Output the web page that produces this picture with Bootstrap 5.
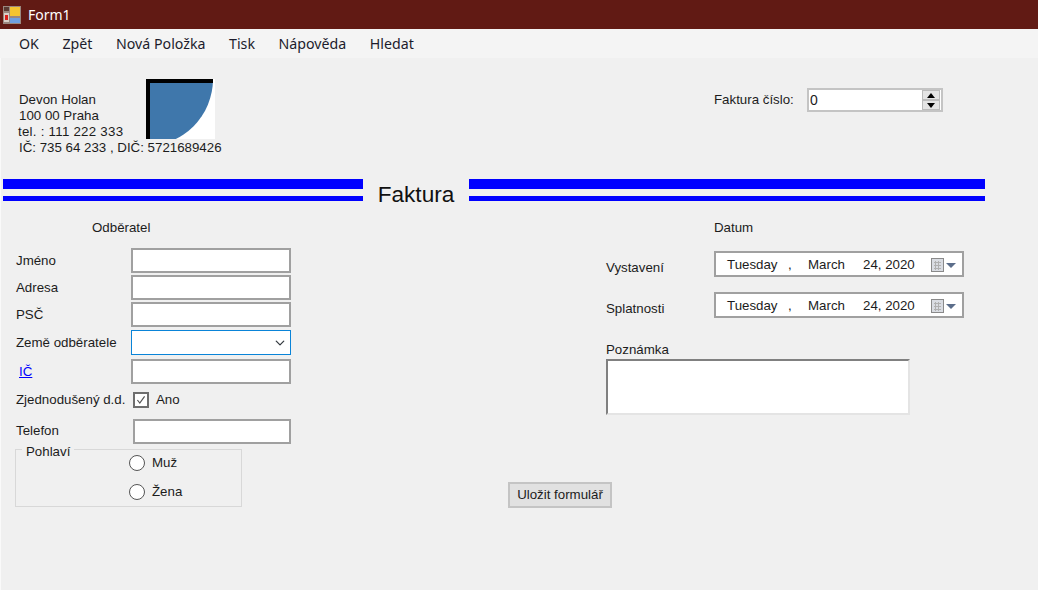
<!DOCTYPE html>
<html lang="cs">
<head>
    <meta charset="UTF-8">
    <meta name="viewport" content="width=device-width, initial-scale=1.0">
    <title>Form1</title>
    <link href="https://cdn.jsdelivr.net/npm/bootstrap@5.3.0/dist/css/bootstrap.min.css" rel="stylesheet">
    <style>
        body { background: #f0f0f0; color: #1c1c1c; font: 13.3px/16px "Liberation Sans", Arial, sans-serif; min-height: 590px; overflow: hidden; box-shadow: inset 1px 0 0 #fafafa; }
        .title-bar { height: 29px; background: #611a14; color: #fff; font: 14px/29px "Noto Sans", sans-serif; padding-left: 3px; gap: 7px; }
        .menu-bar { height: 29px; background: #f4f4f4; padding: 0 0 0 19px; font: 14.2px "Noto Sans", sans-serif; justify-content: flex-start; }
        .menu-bar .navbar-nav { gap: 23.6px; }
        .menu-bar .nav-link { padding: 0; color: #1c1c2c; line-height: 29px; }
        .head-area { height: 121px; padding: 21px 0 0 19px; }
        .seller { width: 127px; padding-top: 13px; white-space: nowrap; }
        .seller div:nth-child(3) { margin-left: -1px; letter-spacing: .25px; }
        .logo-pic { width: 69px; height: 60px; display: block; }
        .number-box { margin-left: 499px; margin-top: 9px; }
        .number-box label { width: 93px; }
        .spin-wrap { width: 136px; height: 24px; border: 2px solid #c4c4c4; background: #fff; }
        .spin-wrap input { width: 112px; border: 0; padding: 0 0 0 1px; outline: 0; font: inherit; font-size: 14px; color: #1c1c1c; }
        .spin-btns { width: 18px; margin: 0 1px 0 auto; }
        .spin-btns span { height: 10px; background: #e4e4e4; border: 1px solid #bbb; font-size: 0; }
        .band { height: 22px; padding-left: 3px; }
        .band-lines { border-top: 10px solid #0000ff; border-bottom: 5px solid #0000ff; height: 22px; }
        .band-title { width: 106px; text-align: center; font-size: 22.6px; line-height: 32px; color: #111; }
        .client-col { width: 300px; padding: 19px 0 0 16px; }
        .col-caption { margin-left: 76px; }
        .client-grid { display: grid; grid-template-columns: 115px 160px; grid-template-rows: 27px 27px 28px 29px 28px 32px 30px; margin-top: 12px; }
        .client-grid label, .client-grid a { line-height: 25px; white-space: nowrap; }
        .client-grid .tel-label { margin-top: -1px; }
        .win-input.form-control, .win-input.form-select { height: 25px; min-height: 0; padding: 0 3px; border: 2px solid #a0a0a0; border-radius: 0; font-size: 13.3px; box-shadow: none; background-color: #fff; }
        .win-input.form-select { border-color: #0a84d8; border-width: 1.5px; background-size: 12px 10px; background-position: right 4px center; }
        .win-input.shifted { margin-left: 2px; width: 158px; }
        .link-ic { color: #0000ff; margin-left: 3px; }
        .check-row { margin-left: 2px; height: 25px; gap: 7px; }
        .win-check.form-check-input { width: 16px; height: 16px; margin: 0; border: 2px solid #6e6e6e; border-radius: 0; background-color: #fff; box-shadow: none; }
        .win-check.form-check-input:checked { background-color: #fff; border-color: #6e6e6e; background-image: url("data:image/svg+xml,%3csvg xmlns='http://www.w3.org/2000/svg' viewBox='0 0 20 20'%3e%3cpath fill='none' stroke='%23555' stroke-width='2' d='M4 10l4 5 8-11'/%3e%3c/svg%3e"); }
        .gender-box { position: relative; width: 227px; height: 58px; margin-left: -1px; border: 1px solid #d8d8d8; padding: 0 0 0 113px; }
        .gender-box .box-title { position: absolute; left: 6px; top: -6px; background: #f0f0f0; padding: 0 4px; }
        .gender-row { height: 29px; gap: 7px; }
        .gender-row:first-of-type { margin-top: -2px; }
        .win-radio.form-check-input { width: 16px; height: 16px; margin: 0; border: 1.5px solid #555; background-color: #fff; box-shadow: none; }
        .save-col { width: 306px; padding: 281px 0 0 208px; }
        .save-btn.btn { width: 104px; height: 26px; padding: 0; background: #e1e1e1; border: 2px solid #c4c4c4; border-radius: 0; font-size: 13.3px; color: #1c1c1c; }
        .date-col { padding-top: 19px; }
        .date-col .col-caption { margin-left: 108px; }
        .date-row { margin-top: 15px; height: 26px; }
        .date-row label { width: 108px; padding-top: 9px; }
        .date-pick { width: 250px; height: 26px; border: 2px solid #a0a0a0; background: #fff; padding: 2px 0 0 11px; }
        .date-pick span { white-space: nowrap; }
        .part-day { width: 61px; }
        .part-comma { width: 20px; }
        .part-month { width: 55px; }
        .part-year { width: 68px; }
        .note-label { margin-top: 24px; }
        .note-area.form-control { width: 304px; height: 56px; margin-top: 1px; padding: 2px; border-radius: 0; border: 2px solid #e4e4e4; border-top-color: #808080; border-left-color: #808080; box-shadow: none; resize: none; }
    </style>
</head>
<body>

<!-- Title bar -->
<div class="title-bar d-flex align-items-center">
    <svg width="18" height="18" viewBox="0 0 18 18">
        <rect width="18" height="18" fill="#9a8880"/>
        <rect x="1" y="1" width="5" height="4" fill="#5a3a32"/>
        <rect x="1" y="7" width="5" height="9" fill="#d9cfc8"/>
        <rect x="2" y="9" width="3" height="5" fill="#d8201c"/>
        <rect x="7" y="1" width="10" height="9" fill="#f4c430"/>
        <rect x="7" y="12" width="10" height="5" fill="#6f9fe0"/>
    </svg>
    <span>Form1</span>
</div>

<!-- Menu -->
<nav class="navbar menu-bar">
    <ul class="navbar-nav flex-row">
        <li class="nav-item"><a class="nav-link" href="#">OK</a></li>
        <li class="nav-item"><a class="nav-link" href="#">Zpět</a></li>
        <li class="nav-item"><a class="nav-link" href="#">Nová Položka</a></li>
        <li class="nav-item"><a class="nav-link" href="#">Tisk</a></li>
        <li class="nav-item"><a class="nav-link" href="#">Nápověda</a></li>
        <li class="nav-item"><a class="nav-link" href="#">Hledat</a></li>
    </ul>
</nav>

<!-- Hlavicka -->
<div class="head-area d-flex align-items-start">
    <div class="seller">
        <div>Devon Holan</div>
        <div>100 00 Praha</div>
        <div>tel. : 111 222 333</div>
        <div>IČ: 735 64 233 , DIČ: 5721689426</div>
    </div>
    <svg class="logo-pic" viewBox="0 0 69 60">
        <rect width="69" height="60" fill="#fff"/>
        <circle cx="0" cy="0" r="67" fill="#3f77ab"/>
        <path d="M2 60V2H67" fill="none" stroke="#000" stroke-width="4"/>
    </svg>
    <div class="number-box d-flex align-items-center">
        <label for="cislo">Faktura číslo:</label>
        <div class="spin-wrap d-flex">
            <input id="cislo" type="text" value="0">
            <div class="spin-btns d-flex flex-column">
                <span class="d-flex align-items-center justify-content-center"><svg width="8" height="5"><path d="M4 0l4 5H0z"/></svg></span>
                <span class="d-flex align-items-center justify-content-center"><svg width="8" height="5"><path d="M0 0h8L4 5z"/></svg></span>
            </div>
        </div>
    </div>
</div>

<!-- Faktura nadpis -->
<div class="band d-flex">
    <div class="band-lines" style="width: 360px"></div>
    <div class="band-title">Faktura</div>
    <div class="band-lines" style="width: 516px"></div>
</div>

<div class="d-flex">
    <!-- Odberatel -->
    <div class="client-col flex-shrink-0">
        <div class="col-caption">Odběratel</div>
        <div class="client-grid">
            <label for="jmeno">Jméno</label>
            <input id="jmeno" class="form-control win-input">
            <label for="adresa">Adresa</label>
            <input id="adresa" class="form-control win-input">
            <label for="psc">PSČ</label>
            <input id="psc" class="form-control win-input">
            <label for="zeme">Země odběratele</label>
            <select id="zeme" class="form-select win-input"><option></option></select>
            <a class="link-ic" href="#">IČ</a>
            <input class="form-control win-input">
            <label for="zd">Zjednodušený d.d.</label>
            <div class="check-row d-flex align-items-center">
                <input id="zd" class="form-check-input win-check" type="checkbox" checked>
                <span>Ano</span>
            </div>
            <label for="telefon" class="tel-label">Telefon</label>
            <input id="telefon" class="form-control win-input shifted">
        </div>
        <div class="gender-box">
            <span class="box-title">Pohlaví</span>
            <div class="gender-row d-flex align-items-center">
                <input class="form-check-input win-radio" type="radio" name="pohlavi">
                <span>Muž</span>
            </div>
            <div class="gender-row d-flex align-items-center">
                <input class="form-check-input win-radio" type="radio" name="pohlavi">
                <span>Žena</span>
            </div>
        </div>
    </div>

    <div class="save-col flex-shrink-0">
        <button type="button" class="btn save-btn">Uložit formulář</button>
    </div>

    <!-- Datum -->
    <div class="date-col">
        <div class="col-caption">Datum</div>
        <div class="date-row d-flex">
            <label>Vystavení</label>
            <div class="date-pick d-flex align-items-center">
                <span class="part-day">Tuesday</span><span class="part-comma">,</span><span class="part-month">March</span><span class="part-year">24, 2020</span>
                <svg width="26" height="15" viewBox="0 0 26 15">
                    <rect x="0.5" y="0.5" width="12" height="13" fill="#d9dce2" stroke="#8a8a8a"/>
                    <path d="M3 4.500h7M3 7.500h7M3 10.500h7M4.500 3v9M7.500 3v9" stroke="#b0b0b0" fill="none"/>
                    <path d="M15 5h10l-5 5z" fill="#5b6d8a"/>
                </svg>
            </div>
        </div>
        <div class="date-row d-flex">
            <label>Splatnosti</label>
            <div class="date-pick d-flex align-items-center">
                <span class="part-day">Tuesday</span><span class="part-comma">,</span><span class="part-month">March</span><span class="part-year">24, 2020</span>
                <svg width="26" height="15" viewBox="0 0 26 15">
                    <rect x="0.5" y="0.5" width="12" height="13" fill="#d9dce2" stroke="#8a8a8a"/>
                    <path d="M3 4.500h7M3 7.500h7M3 10.500h7M4.500 3v9M7.500 3v9" stroke="#b0b0b0" fill="none"/>
                    <path d="M15 5h10l-5 5z" fill="#5b6d8a"/>
                </svg>
            </div>
        </div>
        <div class="note-label">Poznámka</div>
        <textarea class="form-control note-area"></textarea>
    </div>
</div>

<script src="https://cdn.jsdelivr.net/npm/bootstrap@5.3.0/dist/js/bootstrap.bundle.min.js"></script>
</body>
</html>
